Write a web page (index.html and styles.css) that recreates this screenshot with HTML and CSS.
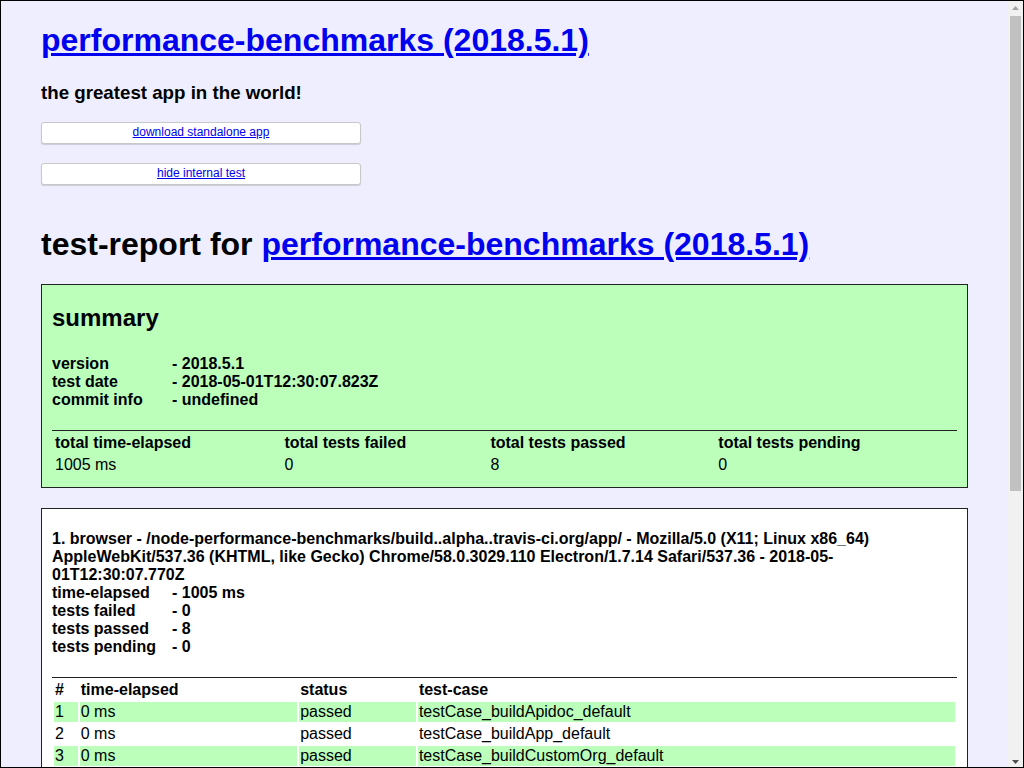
FILE: index.html
```html
<!DOCTYPE html>
<html lang="en">
<head>
<meta charset="utf-8">
<title>performance-benchmarks (2018.5.1)</title>
<link rel="stylesheet" href="styles.css">
</head>
<body>
<div class="frame">
  <div class="viewport">
    <div class="page">
      <h1 class="app-title"><a href="#">performance-benchmarks (2018.5.1)</a></h1>
      <h3 class="app-desc">the greatest app in the world!</h3>
      <div class="btn"><a href="#">download standalone app</a></div>
      <div class="btn"><a href="#">hide internal test</a></div>

      <h1 class="report-title">test-report for <a href="#">performance-benchmarks (2018.5.1)</a></h1>

      <div class="box summary">
        <h2 class="summary-title">summary</h2>
        <div class="info">
          <span>version</span><span>- 2018.5.1</span>
          <span>test date</span><span>- 2018-05-01T12:30:07.823Z</span>
          <span>commit info</span><span>- undefined</span>
        </div>
        <table class="report-table">
          <thead>
            <tr><th>total time-elapsed</th><th>total tests failed</th><th>total tests passed</th><th>total tests pending</th></tr>
          </thead>
          <tbody>
            <tr><td>1005 ms</td><td>0</td><td>8</td><td>0</td></tr>
          </tbody>
        </table>
      </div>

      <div class="box platform">
        <div class="platform-name">1. browser - /node-performance-benchmarks/build..alpha..travis-ci.org/app/ - Mozilla/5.0 (X11; Linux x86_64) AppleWebKit/537.36 (KHTML, like Gecko) Chrome/58.0.3029.110 Electron/1.7.14 Safari/537.36 - 2018-05-01T12:30:07.770Z</div>
        <div class="info">
          <span>time-elapsed</span><span>- 1005 ms</span>
          <span>tests failed</span><span>- 0</span>
          <span>tests passed</span><span>- 8</span>
          <span>tests pending</span><span>- 0</span>
        </div>
        <table class="report-table cases">
          <thead>
            <tr><th>#</th><th>time-elapsed</th><th>status</th><th>test-case</th></tr>
          </thead>
          <tbody>
            <tr><td>1</td><td>0 ms</td><td>passed</td><td>testCase_buildApidoc_default</td></tr>
            <tr><td>2</td><td>0 ms</td><td>passed</td><td>testCase_buildApp_default</td></tr>
            <tr><td>3</td><td>0 ms</td><td>passed</td><td>testCase_buildCustomOrg_default</td></tr>
            <tr><td>4</td><td>0 ms</td><td>passed</td><td>testCase_buildReadme_default</td></tr>
            <tr><td>5</td><td>0 ms</td><td>passed</td><td>testCase_buildTest_default</td></tr>
            <tr><td>6</td><td>0 ms</td><td>passed</td><td>testCase_webpage_default</td></tr>
            <tr><td>7</td><td>0 ms</td><td>passed</td><td>testCase_buildLib_default</td></tr>
            <tr><td>8</td><td>0 ms</td><td>passed</td><td>testCase_buildDoc_default</td></tr>
          </tbody>
        </table>
      </div>

      <div class="footer">[ this app was created with <a href="#">utility2</a> ]</div>
    </div>
  </div>
  <div class="scrollbar" aria-hidden="true">
    <div class="sb-btn">
      <svg width="7" height="4" viewBox="0 0 7 4"><polygon points="0,4 7,4 3.5,0" fill="#a3a3a3"/></svg>
    </div>
    <div class="sb-thumb"></div>
    <div class="sb-track"></div>
    <div class="sb-btn sb-down">
      <svg width="7" height="4" viewBox="0 0 7 4"><polygon points="0,0 7,0 3.5,4" fill="#505050"/></svg>
    </div>
  </div>
</div>
</body>
</html>
```

FILE: styles.css
```css
html, body {
  margin: 0;
  padding: 0;
  height: 100%;
  overflow: hidden;
}

.frame {
  box-sizing: border-box;
  height: 100vh;
  border: 1px solid #000;
  display: flex;
}

.viewport {
  flex: 1;
  min-width: 0;
  overflow: hidden;
  background: #eef;
}

.scrollbar {
  width: 15px;
  flex: none;
  background: #f1f1f1;
  display: flex;
  flex-direction: column;
}

.sb-btn {
  height: 15px;
  flex: none;
  display: flex;
  align-items: center;
  justify-content: center;
}

.sb-btn svg {
  display: block;
  margin-top: -2px;
}

.sb-down svg {
  margin-top: 4px;
}

.sb-thumb {
  flex: none;
  height: 475px;
  margin: 0 2px;
  background: #c1c1c1;
}

.sb-track {
  flex: 1;
}

.page {
  margin: 0 40px;
  font-family: "Liberation Sans", Arial, Helvetica, sans-serif;
  color: #000;
}

a {
  color: #00e;
}

.app-title,
.report-title {
  font-size: 32px;
  margin: 21px 0;
}

.app-desc {
  font-size: 18.72px;
  margin: 23px 0 18px;
}

.btn {
  box-sizing: border-box;
  width: 320px;
  height: 22px;
  margin-bottom: 19px;
  background: #fff;
  border: 1px solid #c8c8c8;
  border-radius: 3px;
  box-shadow: 0 1px 1px rgba(0, 0, 0, 0.15);
  font-size: 12px;
  line-height: 19px;
  text-align: center;
}

.report-title {
  margin-top: 41px;
  margin-bottom: 21px;
}

.box {
  border: 1px solid #222;
  padding: 0 10px 10px;
  margin-bottom: 20px;
  font-weight: bold;
}

.summary {
  background: #bfb;
}

.platform {
  background: #fff;
  padding-top: 21px;
}

.summary-title {
  font-size: 24px;
  margin: 19px 0 23px;
}

.info {
  display: grid;
  grid-template-columns: 120px 1fr;
  font-size: 16px;
  line-height: 18px;
  margin-bottom: 21px;
}

.platform-name {
  font-size: 16px;
  line-height: 18px;
}

.report-table {
  width: 100%;
  border-top: 1px solid #222;
  border-spacing: 2px;
  font-size: 16px;
}

.report-table th,
.report-table td {
  padding: 1px;
  text-align: left;
}

.report-table th {
  font-weight: bold;
}

.report-table td {
  font-weight: normal;
}

.cases tbody tr:nth-child(odd) {
  background: #bfb;
}

.footer {
  padding: 250px 0 20px;
  text-align: center;
  font-size: 12px;
}
```
